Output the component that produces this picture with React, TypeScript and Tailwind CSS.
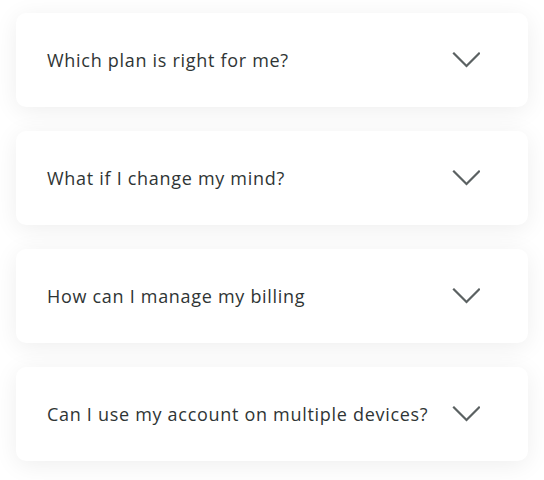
import React from "react";

const questions = [
    "Which plan is right for me?",
    "What if I change my mind?",
    "How can I manage my billing",
    "Can I use my account on multiple devices?"
];

const Chevron = () => (
    <svg width="28" height="16" viewBox="0 0 28 16" fill="none" className="shrink-0">
        <path d="M2 1.5 L14.5 14 L27 1.5" stroke="#5b6162" strokeWidth="2.2" strokeLinecap="square" />
    </svg>
);

export default function App() {
    return (
        <div className="min-h-[480px] bg-white px-4 pt-[13px] flex flex-col gap-6" style={{ fontFamily: "'Open Sans', sans-serif" }}>
            {questions.map((q, i) => (
                <div
                    key={i}
                    className="h-[94px] rounded-[10px] bg-white flex items-center justify-between pl-[31px] pr-12 shadow-[0_4px_24px_rgba(0,0,0,0.07)]"
                >
                    <span className="text-[18px] font-medium tracking-[0.7px] text-[#2f3535]">{q}</span>
                    <Chevron />
                </div>
            ))}
        </div>
    );
}
